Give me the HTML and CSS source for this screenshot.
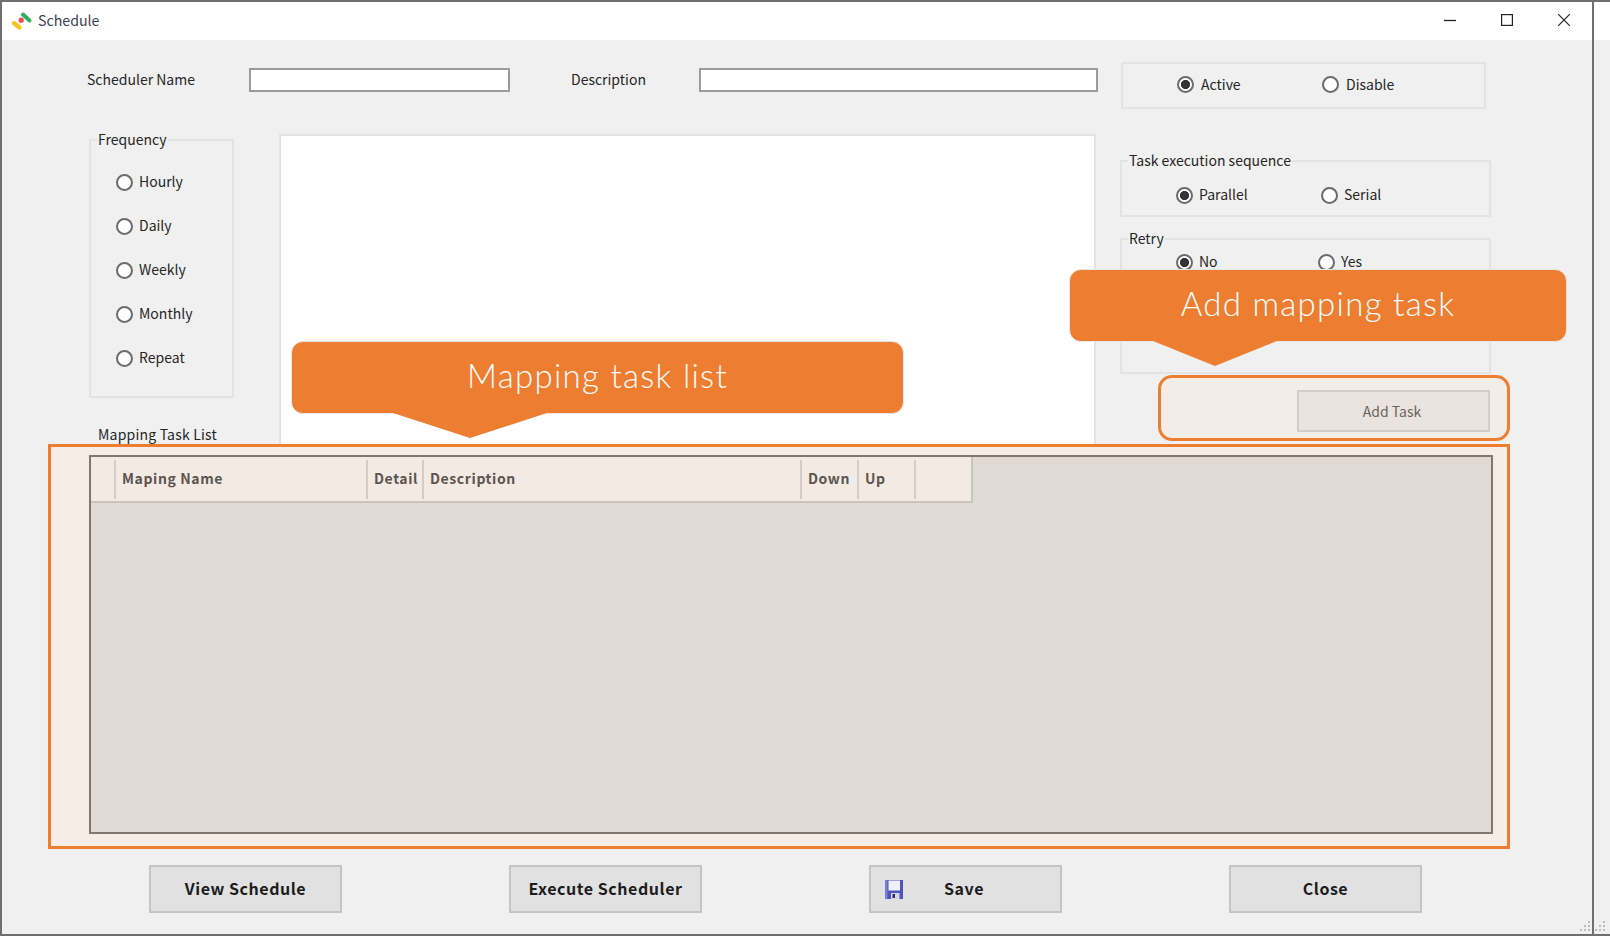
FILE: index.html
```html
<!DOCTYPE html>
<html lang="en">
<head>
<meta charset="utf-8">
<title>Schedule</title>
<link rel="stylesheet" href="styles.css">
</head>
<body>
<div class="page">
  <div class="window">
    <header class="titlebar">
      <svg class="logo" width="22" height="20" viewBox="0 0 22 20"><path d="M3 12 8.5 16.5" stroke="#f7c61a" stroke-width="4.2" stroke-linecap="round"/><circle cx="10.2" cy="9.2" r="2.6" fill="#ea4a5a"/><path d="M12 3.5 18.5 9.5" stroke="#2fae5c" stroke-width="4" stroke-linecap="round"/></svg>
      <span class="title">Schedule</span>
      <div class="controls">
        <svg width="12" height="12" viewBox="0 0 12 12"><path d="M0 6.5H12" stroke="#222" stroke-width="1.3"/></svg>
        <svg width="12" height="12" viewBox="0 0 12 12"><rect x="0.6" y="0.6" width="10.8" height="10.8" fill="none" stroke="#222" stroke-width="1.2"/></svg>
        <svg width="12" height="12" viewBox="0 0 12 12"><path d="M0 0 12 12M12 0 0 12" stroke="#222" stroke-width="1.2"/></svg>
      </div>
    </header>
    <main class="form">
      <div class="top-row">
        <label class="lbl lbl-name">Scheduler Name</label>
        <div class="input input-name"></div>
        <label class="lbl lbl-desc">Description</label>
        <div class="input input-desc"></div>
        <div class="box status">
          <span class="radio"><i class="mark on"></i>Active</span>
          <span class="radio"><i class="mark"></i>Disable</span>
        </div>
      </div>
      <div class="main-row">
        <div class="left-col">
          <fieldset class="group freq">
            <legend>Frequency</legend>
            <div class="opts opts-col">
              <span class="radio"><i class="mark"></i>Hourly</span>
              <span class="radio"><i class="mark"></i>Daily</span>
              <span class="radio"><i class="mark"></i>Weekly</span>
              <span class="radio"><i class="mark"></i>Monthly</span>
              <span class="radio"><i class="mark"></i>Repeat</span>
            </div>
          </fieldset>
          <div class="list-label">Mapping Task List</div>
        </div>
        <div class="panel"></div>
        <div class="right-col">
          <fieldset class="group seq">
            <legend>Task execution sequence</legend>
            <div class="opts opts-seq">
              <span class="radio"><i class="mark on"></i>Parallel</span>
              <span class="radio"><i class="mark"></i>Serial</span>
            </div>
          </fieldset>
          <fieldset class="group retry">
            <legend>Retry</legend>
            <div class="opts opts-retry">
              <span class="radio"><i class="mark on"></i>No</span>
              <span class="radio"><i class="mark"></i>Yes</span>
            </div>
          </fieldset>
          <div class="add-highlight">
            <div class="add-btn">Add Task</div>
          </div>
        </div>
      </div>
      <section class="list-highlight">
        <div class="grid">
          <div class="grid-head">
            <div class="cell"></div>
            <div class="cell">Maping Name</div>
            <div class="cell">Detail</div>
            <div class="cell">Description</div>
            <div class="cell">Down</div>
            <div class="cell">Up</div>
            <div class="cell"></div>
          </div>
        </div>
      </section>
      <div class="buttons">
        <div class="btn">View Schedule</div>
        <div class="btn">Execute Scheduler</div>
        <div class="btn btn-save">
          <svg class="save-icon" width="18" height="19" viewBox="0 0 18 19"><rect width="18" height="19" fill="#4f55bd"/><rect width="2.5" height="19" fill="#7580dc"/><rect x="3.5" y="0.5" width="11.5" height="10" fill="#eef0fa"/><rect x="6" y="13" width="8.5" height="6" fill="#d3d6e2"/><rect x="7.5" y="14" width="2.5" height="4" fill="#2b2f70"/></svg>
          <span>Save</span>
        </div>
        <div class="btn">Close</div>
      </div>
    </main>
    <svg class="grip grip-in" width="11" height="11" viewBox="0 0 11 11"><path d="M8 0h2v2H8zM4 4h2v2H4zM8 4h2v2H8zM0 8h2v2H0zM4 8h2v2H4zM8 8h2v2H8z" fill="#bdbdbd"/></svg>
    <div class="callout callout-list">Mapping task list</div>
    <div class="callout callout-add">Add mapping task</div>
  </div>
  <div class="strip">
    <div class="strip-top"></div>
    <svg class="grip grip-out" width="11" height="11" viewBox="0 0 11 11"><path d="M8 0h2v2H8zM4 4h2v2H4zM8 4h2v2H8zM0 8h2v2H0zM4 8h2v2H4zM8 8h2v2H8z" fill="#bdbdbd"/></svg>
  </div>
</div>
</body>
</html>
```
FILE: styles.css
```css
* { box-sizing: border-box; }
html, body { margin: 0; height: 100%; overflow: hidden; }
body {
  background: #f0f0f0;
  font-family: "Noto Sans CJK JP", "Noto Sans", sans-serif;
  font-size: 14px;
  line-height: 20px;
  color: #262626;
}
.page {
  display: flex;
  width: 1610px;
  height: 936px;
  border-top: 2px solid #6f6f6f;
  border-bottom: 2px solid #6f6f6f;
}
.window {
  position: relative;
  width: 1594px;
  height: 932px;
  border-left: 2px solid #6f6f6f;
  border-right: 2px solid #6f6f6f;
}
.strip { position: relative; flex: 1; }
.strip-top { height: 38px; background: #fff; }

.titlebar {
  display: flex;
  align-items: center;
  height: 38px;
  background: #fff;
  padding: 0 22px 0 9px;
}
.logo { margin-right: 5px; }
.title { font-size: 14.2px; color: #3b4150; margin-top: -2px; }
.controls { margin-left: auto; display: flex; gap: 45px; align-items: center; margin-top: -2px; }

.form { padding-top: 22px; }

.top-row { display: flex; align-items: flex-start; height: 47px; padding-left: 85px; }
.lbl { margin-top: 7px; }
.lbl-name { width: 162px; }
.lbl-desc { width: 128px; margin-left: 61px; }
.input { height: 24px; margin-top: 6px; background: #fff; border: 2px solid #9b9b9b; }
.input-name { width: 261px; }
.input-desc { width: 399px; }

.box { border: 2px solid #e3e3e3; }
.status {
  display: flex;
  align-items: center;
  width: 365px;
  height: 47px;
  margin-left: 23px;
  padding: 0 0 2px 54px;
}
.status .radio { width: 145px; gap: 7px; }

.radio { display: flex; align-items: center; gap: 6px; height: 20px; padding-bottom: 2px; }
.mark {
  flex: none;
  width: 17px;
  height: 17px;
  margin-top: 2px;
  border: 2px solid #6b6b6b;
  border-radius: 50%;
  background: #fff;
}
.mark.on { background: radial-gradient(circle, #333 0 4.2px, #fff 5px); }

.group {
  margin: 0;
  padding: 0;
  min-width: 0;
  border: 2px solid #e3e3e3;
}
.group legend { padding: 0 1px 2px; margin-left: 6px; line-height: 18px; }
.opts { display: flex; padding-left: 54px; }
.opts-col { flex-direction: column; gap: 24px; padding: 22px 0 0 25px; }
.opts-seq { padding-top: 14px; }
.opts-seq .radio { width: 145px; }
.opts-retry { padding-top: 3px; }
.opts-retry .radio { width: 142px; }

.main-row { display: flex; height: 314px; margin-top: 21px; padding-left: 87px; }
.left-col { width: 145px; }
.freq { height: 268px; }
.list-label { margin: 26px 0 0 9px; letter-spacing: 0.2px; }
.panel {
  width: 817px;
  height: 310px;
  margin: 4px 24px 0 45px;
  background: #fff;
  border: 2px solid #e3e3e3;
  border-bottom: 0;
}
.right-col { width: 389px; }
.seq, .retry { width: 371px; }
.seq { height: 66px; margin-top: 21px; }
.retry { height: 145px; margin-top: 12px; }

.add-highlight {
  display: flex;
  align-items: center;
  justify-content: flex-end;
  width: 352px;
  height: 66px;
  margin: 1px 0 0 38px;
  padding: 5px 17px 0 0;
  background: #f4ece6;
  border: 3px solid #ed7d31;
  border-radius: 14px;
}
.add-btn {
  display: flex;
  align-items: center;
  justify-content: center;
  width: 193px;
  height: 42px;
  padding-right: 3px;
  background: #ebe3de;
  border: 2px solid #d3cdc8;
  color: #6a6561;
}

.list-highlight {
  display: flex;
  width: 1462px;
  height: 405px;
  margin-left: 46px;
  padding: 8px 14px 12px 38px;
  background: #f5ede6;
  border: 3px solid #ed7d31;
}
.grid {
  flex: 1;
  background: #e1d9d3;
  border: 2px solid #7f7770;
}
.grid-head {
  display: grid;
  grid-template-columns: 25px 252px 56px 378px 57px 57px 55px;
  width: 882px;
  height: 46px;
  background: #f3eae4;
  border-bottom: 2px solid #cac4be;
  border-right: 2px solid #cac4be;
}
.cell {
  display: flex;
  align-items: center;
  padding: 0 0 3px 6px;
  border-right: 2px solid #d4cdc7;
  margin: 3px 0 2px;
  font-weight: 700;
  font-size: 14px;
  letter-spacing: 0.6px;
  color: #5c5550;
}
.cell:last-child { border-right: 0; }

.buttons { display: flex; gap: 167px; margin: 16px 0 0 147px; }
.btn {
  display: flex;
  align-items: center;
  justify-content: center;
  width: 193px;
  height: 48px;
  padding-bottom: 2px;
  background: #e1e1e1;
  border: 2px solid #c4c4c4;
  font-size: 16px;
  font-weight: 700;
  letter-spacing: 0.55px;
  color: #1c1c1c;
}
.btn-save { justify-content: flex-start; gap: 41px; padding-left: 14px; }
.save-icon { margin-top: 2px; }

.grip { position: absolute; }
.grip-in { right: 1px; bottom: 2px; }
.grip-out { right: 4px; bottom: 2px; }

.callout {
  position: absolute;
  display: flex;
  align-items: center;
  justify-content: center;
  height: 73px;
  background: #ed7d31;
  border: 1.5px solid #e6e6e6;
  border-radius: 12px;
  color: #fff;
  font-family: Lato, "Noto Sans", sans-serif;
  font-weight: 300;
  font-size: 33px;
  letter-spacing: 1.3px;
  padding-bottom: 5px;
}
.callout::after {
  content: "";
  position: absolute;
  top: 100%;
  height: 25px;
  background: #ed7d31;
  clip-path: polygon(0 0, 100% 0, 50% 100%);
}
.callout-list { left: 289px; top: 339px; width: 613px; }
.callout-list::after { left: 101px; width: 154px; }
.callout-add { left: 1067px; top: 267px; width: 498px; }
.callout-add::after { left: 83px; width: 124px; }
```
